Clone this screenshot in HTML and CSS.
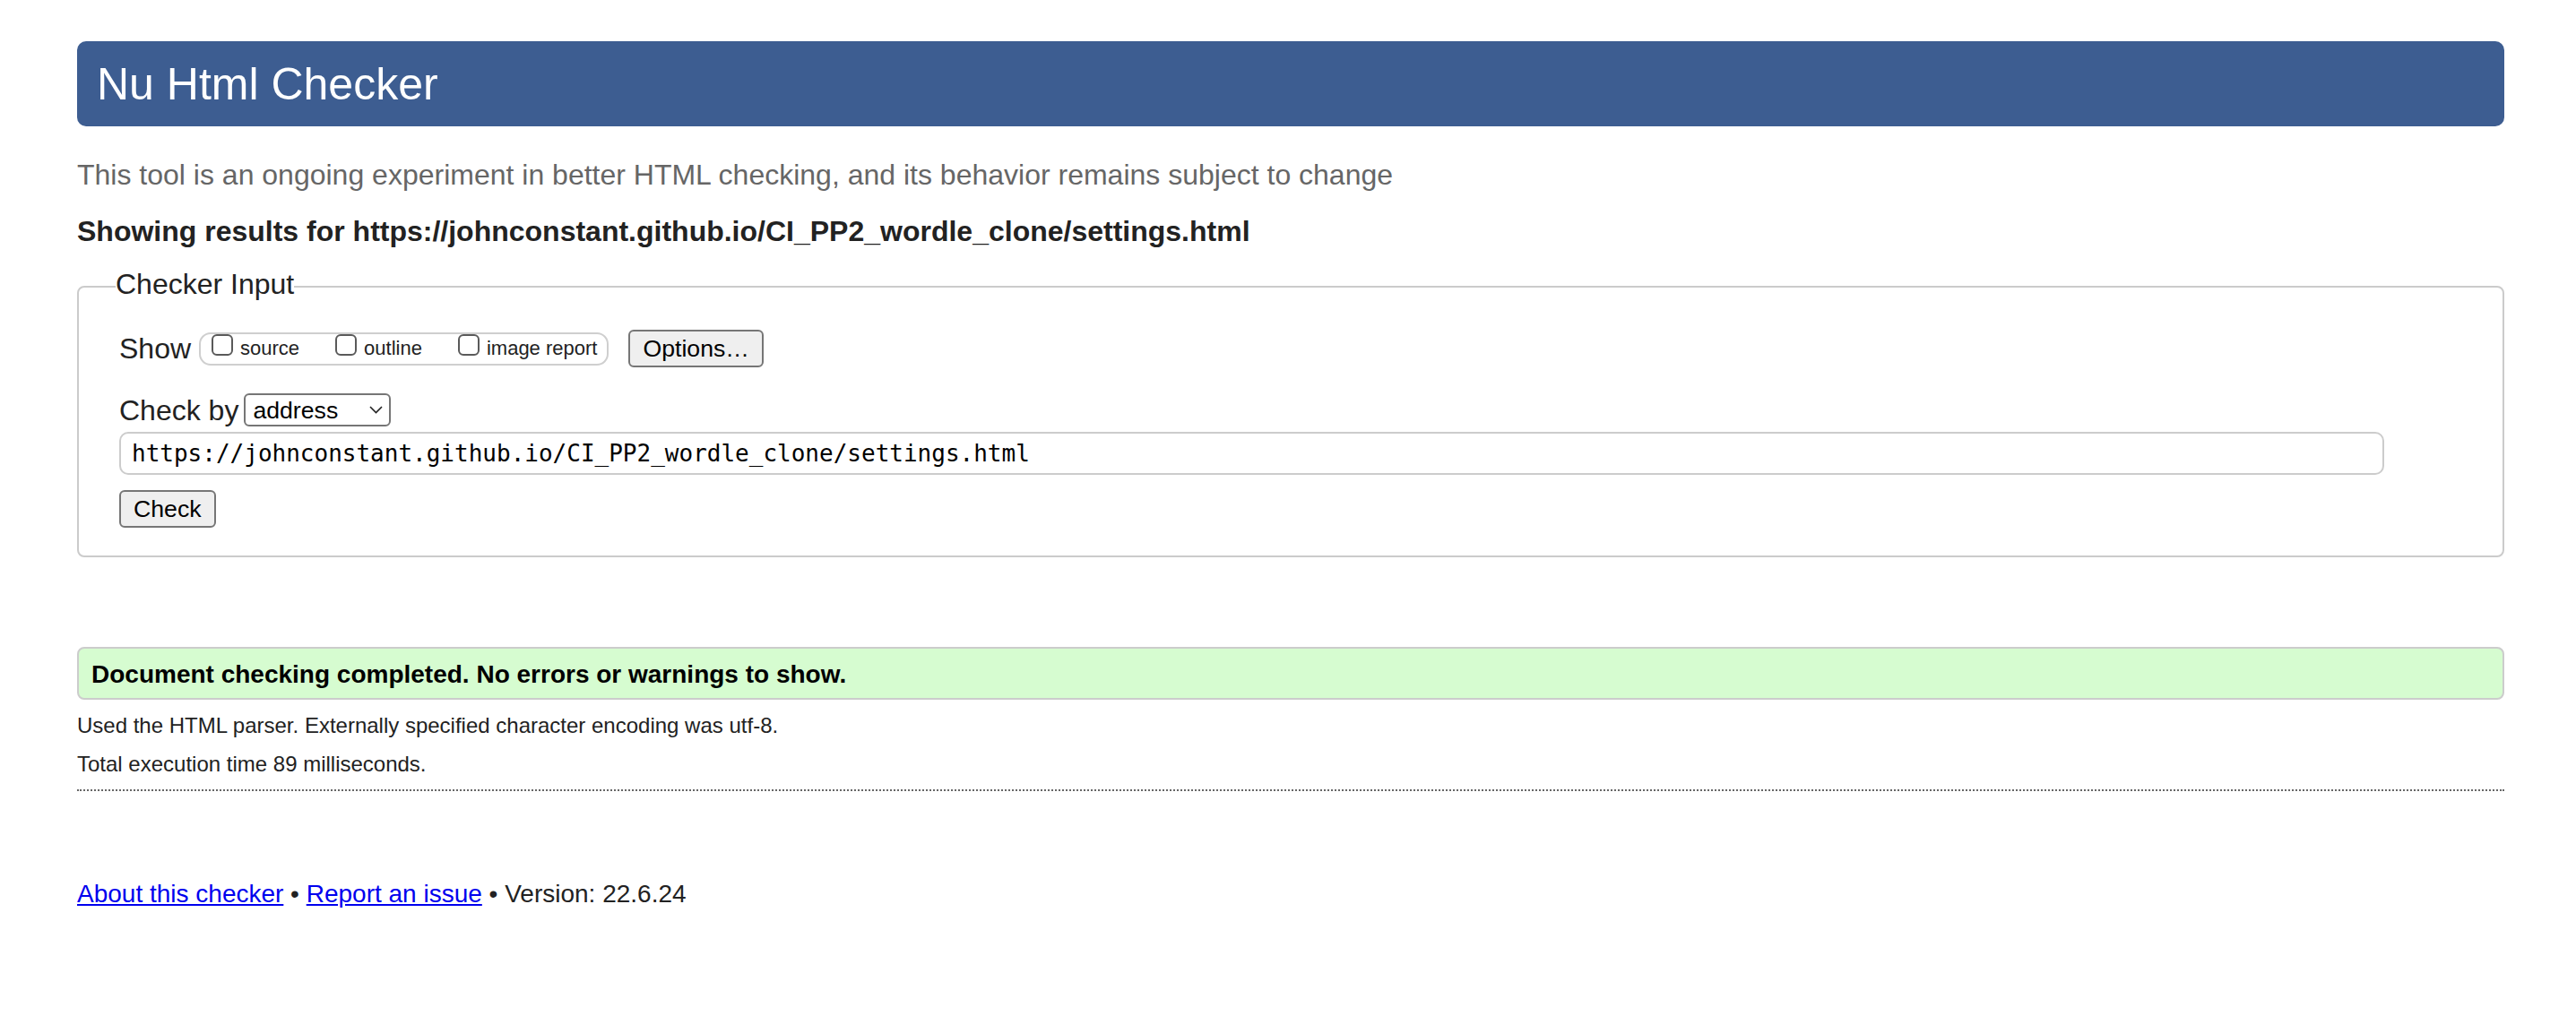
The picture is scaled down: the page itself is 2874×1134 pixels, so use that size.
FILE: index.html
```html
<!DOCTYPE html>
<html>
<head>
    <meta charset="utf-8">
    <meta name="viewport" content="width=device-width, initial-scale=1.0">
    <title>Showing results for https://johnconstant.github.io/CI_PP2_wordle_clone/settings.html - Nu Html Checker</title>

<link rel="stylesheet" href="styles.css">
</head>

<body>
    <h1>Nu Html Checker</h1>
    <p class="intro">This tool is an ongoing experiment in better HTML checking, and its behavior remains subject to change</p>
    <p class="results-for">Showing results for https://johnconstant.github.io/CI_PP2_wordle_clone/settings.html</p>

    <form class="checker" onsubmit="return false">
    <fieldset>
        <legend>Checker Input</legend>

        <div class="row show-row">
            <span class="row-label show-label">Show</span>
            <span class="show-group">
                <label><input type="checkbox" name="showsource"> source</label>
                <label><input type="checkbox" name="showoutline"> outline</label>
                <label><input type="checkbox" name="showimagereport"> image report</label>
            </span>
            <button type="button" class="btn">Options…</button>
        </div>

        <div class="row check-row">
            <label class="row-label check-label" for="docselect">Check by</label>
            <span class="select-wrap">
                <select id="docselect">
                    <option>address</option>
                    <option>file upload</option>
                    <option>text input</option>
                </select>
                <svg class="chevron" viewBox="0 0 15 9" width="15" height="9">
                    <path d="M1 1 L7.5 7.5 L14 1" fill="none" stroke="#222" stroke-width="1.6"/>
                </svg>
            </span>
        </div>

        <input type="url" class="url" name="doc" value="https://johnconstant.github.io/CI_PP2_wordle_clone/settings.html">

        <button type="submit" class="btn check-btn">Check</button>
    </fieldset>
    </form>

    <p class="success">Document checking completed. No errors or warnings to show.</p>

    <div class="details">
        <p>Used the HTML parser. Externally specified character encoding was utf-8.</p>
        <p>Total execution time 89 milliseconds.</p>
    </div>

    <hr class="dots">

    <p class="footer"><a href="#">About this checker</a> • <a href="#">Report an issue</a> • Version: 22.6.24</p>
</body>
</html>
```

FILE: styles.css
```css
body {
    margin: 0;
    padding: 46px 80px 40px 86px;
    font-family: "Liberation Sans", Arial, Helvetica, sans-serif;
    color: #222;
    background: #fff;
}

h1 {
    margin: 0;
    height: 95px;
    padding: 0 22px;
    display: flex;
    align-items: center;
    background: #3d5d91;
    color: #fff;
    font-size: 50px;
    font-weight: normal;
    border-radius: 10px;
}

.intro {
    margin: 34px 0 0;
    font-size: 32px;
    line-height: 40px;
    color: #666;
}

.results-for {
    margin: 23px 0 0;
    font-size: 32px;
    line-height: 40px;
    font-weight: bold;
}

.checker {
    margin: 0;
}

fieldset {
    margin: 19px 0 0;
    padding: 0 0 31px 45px;
    border: 2px solid #cbcbcb;
    border-radius: 8px;
    min-width: 0;
}

legend {
    margin-left: -4px;
    padding: 0 0 6px;
    font-size: 32px;
    line-height: 40px;
}

.row {
    display: flex;
    align-items: center;
}

.row-label {
    font-size: 32px;
    line-height: 40px;
}

.show-row {
    margin-top: 25px;
    height: 42px;
}

.show-label {
    margin-right: 9px;
}

.show-group {
    display: flex;
    align-items: center;
    height: 37px;
    box-sizing: border-box;
    padding: 0 11px 0 12px;
    margin-right: 22px;
    border: 2px solid #cfcfcf;
    border-radius: 13px;
}

.show-group label {
    display: flex;
    align-items: center;
    align-self: stretch;
    font-size: 22px;
    line-height: 26px;
}

.show-group label + label {
    margin-left: 40px;
}

.show-group input {
    -webkit-appearance: none;
    appearance: none;
    align-self: flex-start;
    box-sizing: border-box;
    width: 24px;
    height: 24px;
    margin: 0 8px 0 0;
    border: 2px solid #5a5a5a;
    border-radius: 6px;
    background: #fff;
}

.btn {
    height: 42px;
    box-sizing: border-box;
    padding: 0 14px;
    font-family: inherit;
    font-size: 26.67px;
    color: #000;
    background: #efefef;
    border: 2px solid #767676;
    border-radius: 6px;
}

.check-row {
    margin-top: 29px;
    height: 37px;
}

.check-label {
    margin-right: 6px;
}

.select-wrap {
    position: relative;
    display: block;
    height: 37px;
}

.select-wrap select {
    -webkit-appearance: none;
    appearance: none;
    width: 164px;
    height: 37px;
    box-sizing: border-box;
    padding: 0 0 0 8px;
    margin: 0;
    border: 2px solid #767676;
    border-radius: 6px;
    background: #fff;
    font-family: inherit;
    font-size: 26.67px;
    color: #000;
}

.chevron {
    position: absolute;
    right: 9px;
    top: 14px;
    pointer-events: none;
}

.url {
    display: block;
    margin: 6px 0 0;
    width: 2527px;
    height: 48px;
    box-sizing: border-box;
    padding: 0 12px;
    border: 2px solid #cccccc;
    border-radius: 10px;
    font-family: "DejaVu Sans Mono", monospace;
    font-size: 26px;
    color: #000;
}

.check-btn {
    display: block;
    margin-top: 17px;
}

.success {
    margin: 100px 0 0;
    height: 59px;
    box-sizing: border-box;
    padding: 2px 14px 0;
    display: flex;
    align-items: center;
    border: 2px solid #cccccc;
    border-radius: 8px;
    background: #d6fcd0;
    font-size: 28px;
    font-weight: bold;
    color: #000;
}

.details {
    margin-top: 7px;
}

.details p {
    margin: 0;
    font-size: 24px;
    line-height: 43px;
}

.dots {
    margin: 7px 0 0;
    height: 0;
    border: 0;
    border-top: 2px dotted #666;
}

.footer {
    margin: 95px 0 0;
    font-size: 28px;
    line-height: 40px;
}

.footer a {
    color: #0000ee;
}
```
